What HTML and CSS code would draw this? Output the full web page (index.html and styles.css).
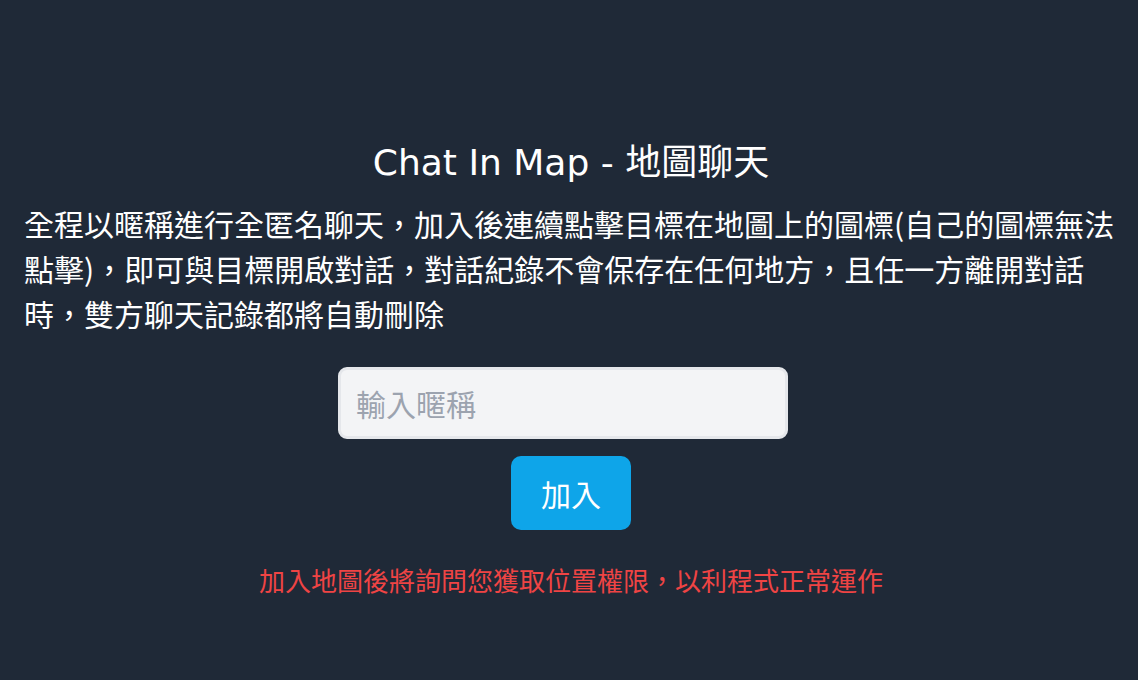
FILE: index.html
```html
<!DOCTYPE html>
<html lang="zh-Hant">
<head>
<meta charset="utf-8">
<title>Chat In Map - 地圖聊天</title>
<link rel="stylesheet" href="styles.css">
</head>
<body>
<main class="page">
  <h1 class="title">Chat In Map - 地圖聊天</h1>
  <p class="intro">全程以暱稱進行全匿名聊天，加入後連續點擊目標在地圖上的圖標(自己的圖標無法點擊)，即可與目標開啟對話，對話紀錄不會保存在任何地方，且任一方離開對話時，雙方聊天記錄都將自動刪除</p>
  <form class="join" onsubmit="return false">
    <input class="nick" type="text" placeholder="輸入暱稱">
    <button class="btn" type="submit">加入</button>
  </form>
  <p class="notice">加入地圖後將詢問您獲取位置權限，以利程式正常運作</p>
</main>
</body>
</html>
```

FILE: styles.css
```css
* { box-sizing: border-box; }
html, body { margin: 0; padding: 0; }
body {
  background: #1f2937;
  color: #ffffff;
  font-family: "Noto Sans CJK TC", "Noto Sans", sans-serif;
  min-height: 100vh;
}
.page {
  display: flex;
  flex-direction: column;
  align-items: center;
  padding: 143px 20px 0 24px;
}
.title {
  margin: 0;
  font-family: "DejaVu Sans", "Noto Sans CJK TC", sans-serif;
  font-size: 36px;
  line-height: 40px;
  font-weight: 400;
  text-align: center;
}
.intro {
  margin: 18px 0 0;
  font-size: 30px;
  line-height: 45px;
  align-self: stretch;
  text-align: left;
}
.join {
  display: flex;
  flex-direction: column;
  align-items: center;
  gap: 17px;
  margin-top: 31px;
}
.nick {
  width: 450px;
  height: 72px;
  margin-right: 16px;
  background: #f3f4f6;
  border: 3px solid #e5e7eb;
  border-radius: 9px;
  padding: 0 15px;
  font-family: inherit;
  font-size: 30px;
  color: #111827;
  outline: none;
}
.nick::placeholder { color: #9ca3af; }
.btn {
  width: 120px;
  height: 74px;
  background: #0ea5e9;
  color: #ffffff;
  border: 0;
  border-radius: 10px;
  font-family: inherit;
  font-size: 30px;
  cursor: pointer;
}
.notice {
  margin: 32px 0 0;
  color: #ef4444;
  font-size: 26px;
  line-height: 36px;
  text-align: center;
}
```
